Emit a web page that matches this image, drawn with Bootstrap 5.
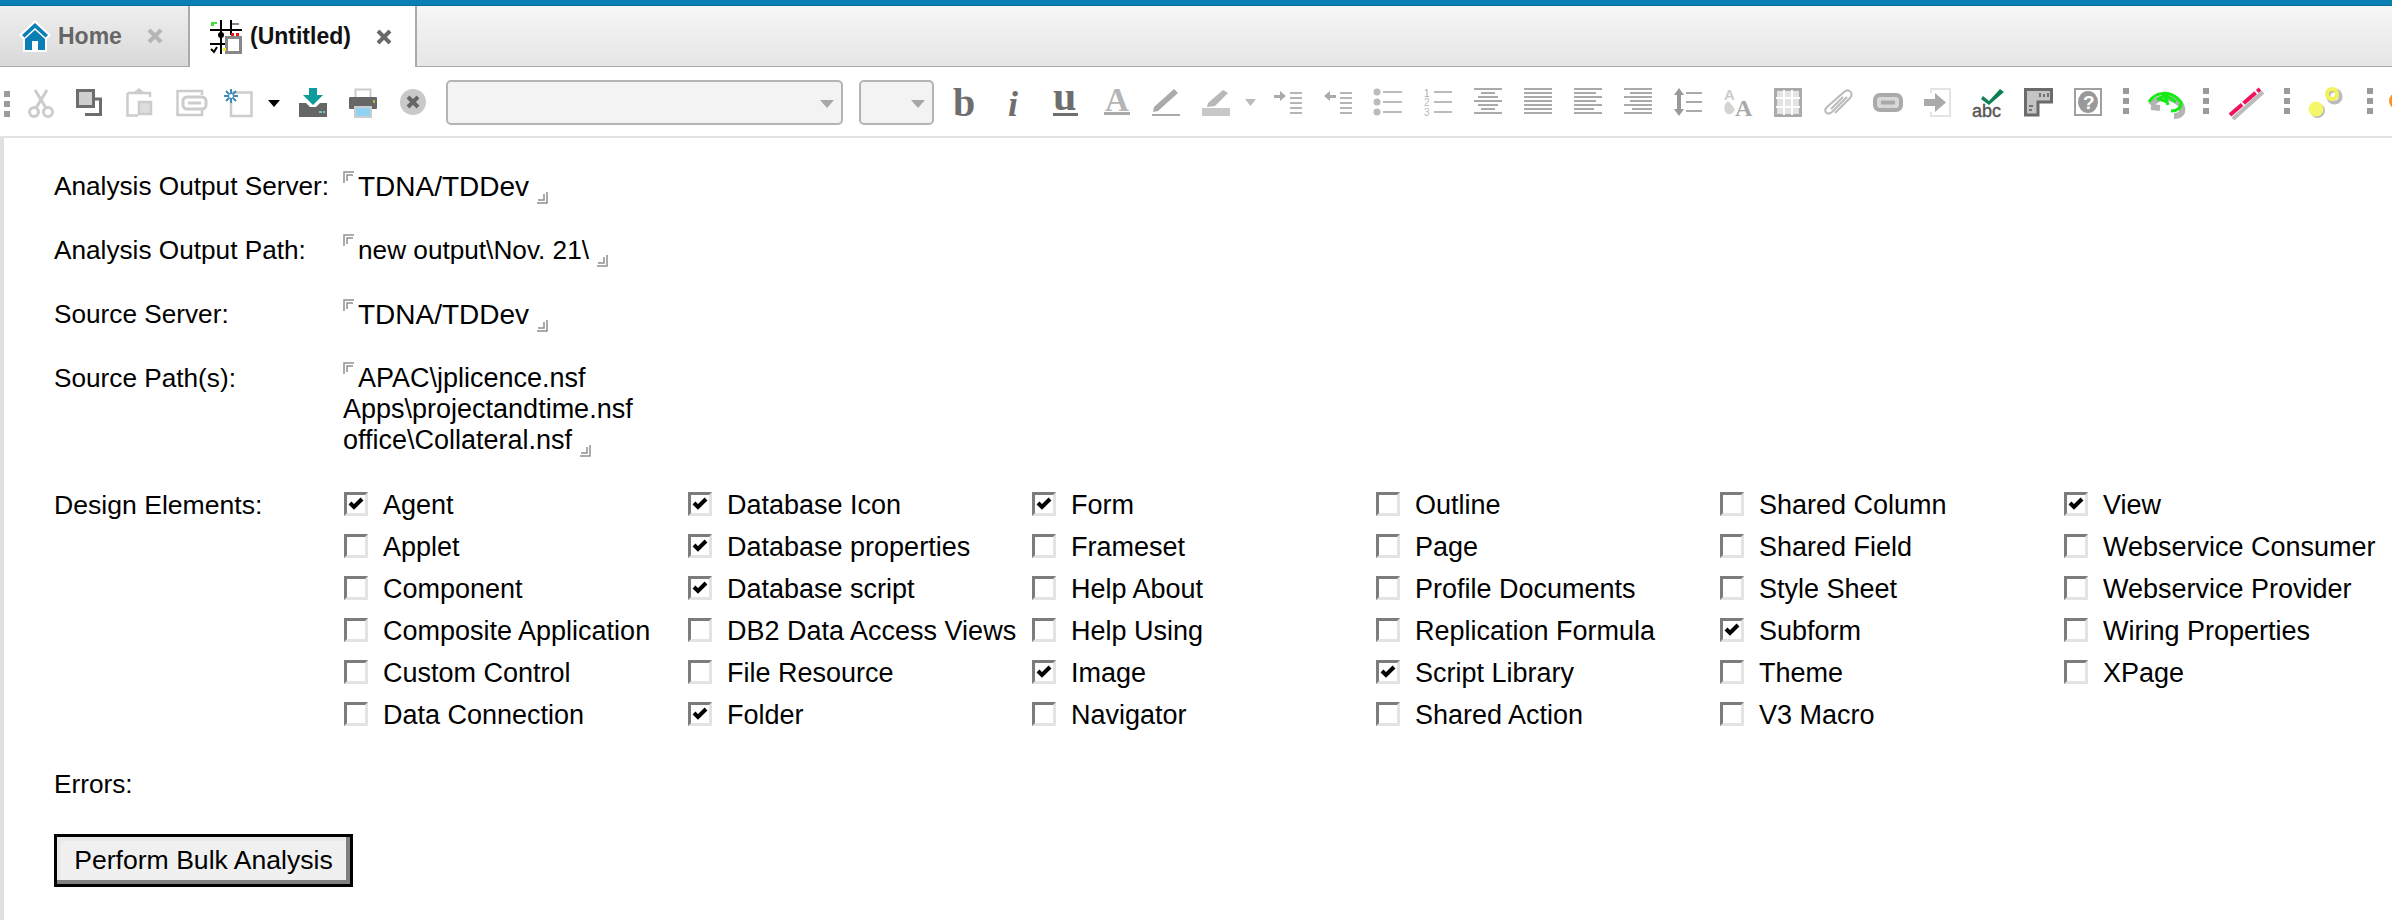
<!DOCTYPE html>
<html lang="en">
<head>
<meta charset="utf-8">
<title>(Untitled)</title>
<link href="https://cdn.jsdelivr.net/npm/bootstrap@5.3.0/dist/css/bootstrap.min.css" rel="stylesheet">
<style>
html,body{height:920px;overflow:hidden;background:#fff}
body{font-family:"Liberation Sans",Arial,sans-serif;color:#000}
.topline{height:6px;background:#0a7fb5;border-bottom:1px solid #0b6f9e}
.tabstrip{height:61px;background:linear-gradient(#f6f6f6,#e6e6e6);border-bottom:1px solid #aaa}
.doctab{height:60px;font-size:23px;font-weight:700;line-height:1}
.tab-home{width:190px;padding-left:19px;background:linear-gradient(#efefef,#d9d9d9);color:#666;border-right:2px solid #aaa}
.tab-home .tabname{margin-left:7px;margin-right:25px}
.tab-doc{width:227px;height:61px;padding-left:20px;background:#fff;border-right:2px solid #aaa;color:#111}
.tab-doc .tabname{margin-left:8px;margin-right:25px}
.tabx{width:16px;height:16px}
.toolstrip{height:71px;padding-top:2px;border-bottom:2px solid #e2e2e2;overflow:hidden}
.ic{display:block;flex:none;width:50px;height:30px;overflow:visible}
.ic-narrow{width:20px}
.ic-mini{width:13px;margin-left:3px;margin-right:6px}
.ic-w36{width:36px}
.ic-w34{width:34px}
.ic-w20{width:20px}
.gripbar{display:flex;flex-direction:column;gap:4px;flex:none;width:6px;margin-top:-3px}
.gripbar i{display:block;width:6px;height:6px;background:#9b9b9b}
.grip-first{margin-top:2px}
.s10{margin-left:10px}.s11{margin-left:11px}.s18{margin-left:18px}.s20{margin-left:20px}.s21{margin-left:21px}.s25{margin-left:25px}
.fakeselect{flex:none;height:45px;border:2px solid #b2b5b8;border-radius:5px;background:#f3f3f3;position:relative;padding:0}
.fakeselect::after{content:"";position:absolute;right:7px;top:18px;border:7px solid transparent;border-top:8px solid #a8a8a8;border-bottom:0}
.sel-font{width:397px;margin-left:8px}
.sel-size{width:75px;margin-left:16px;margin-right:7px}
.docbody{height:782px;border-left:4px solid #e0e0e0;padding:33px 0 0 50px;font-size:26.2px;line-height:31px}
.fieldrow{margin-bottom:33px}
.fieldlabel{flex:none;width:289px}
.label-wide{font-size:26.6px;padding-top:1px}
.val-server{font-size:28px}
.val-path{font-size:27px}
.delim{display:inline-block;width:12px;height:12px}
.delim-open{vertical-align:13px;margin-right:3px;margin-top:-4px}
.delim-close{vertical-align:-4px;margin-left:7px;margin-bottom:-4px}
.elements{width:2040px;margin:0 0 28px 1px;font-size:27px;line-height:33px}
.elcol{flex:none;width:344px}
.elitem{height:42px;margin:0;padding:0;white-space:nowrap}
.elitem .form-check-input{width:24px;height:24px;margin:3px 15px 0 0;flex:none;border-radius:0;border-style:solid;border-width:3px;border-color:#7c7c7c #e3e3e3 #e3e3e3 #7c7c7c;background-color:#fff;background-size:18px 18px;box-shadow:none;opacity:1}
.elitem .form-check-input:checked{background-color:#fff;border-color:#7c7c7c #e3e3e3 #e3e3e3 #7c7c7c;--bs-form-check-bg-image:url("data:image/svg+xml,%3csvg xmlns='http://www.w3.org/2000/svg' viewBox='0 0 18 18'%3e%3cpath d='M3 8l4 4 8-8' fill='none' stroke='%23000' stroke-width='4'/%3e%3c/svg%3e")}
.perform{display:block;width:299px;height:53px;margin-top:34px;padding:0;border:3px solid #000;border-radius:0;background:#f0f0f0;color:#000;font-size:26.6px;line-height:1;box-shadow:inset -4px -4px 0 #808080,inset 4px 4px 0 #e8e8e8}
.perform:hover{background:#f0f0f0;color:#000;border-color:#000}
.glyph{font-family:"Liberation Serif",serif}
</style>
</head>
<body>
<div class="topline"></div>
<div class="tabstrip d-flex align-items-start">
  <div class="doctab tab-home d-flex align-items-center">
    <svg width="32" height="34" viewBox="0 0 32 34"><path d="M16 1 32 16 28 20V33H4V20L0 16Z" fill="#fff"/><path d="M16 4 29 16 26.500 18.500 16 9 5.500 18.500 3 16ZM6 20 16 11 26 20V31H19V22H13V31H6Z" fill="#0a7fb5"/></svg>
    <span class="tabname">Home</span>
    <svg class="tabx" viewBox="0 0 16 16"><path d="M2 2 14 14M14 2 2 14" stroke="#b5b5b5" stroke-width="4"/></svg>
  </div>
  <div class="doctab tab-doc d-flex align-items-center">
    <svg width="32" height="34" viewBox="0 0 32 34"><path d="M0 10H32M0 24H15M11 0V34M21 0V15" stroke="#000" stroke-width="2" fill="none"/><path d="M1 2h6v2H1zM1 4h3v2H1z" fill="#3fe03f"/><path d="M22 3h7v2h-7z" fill="#888"/><path d="M21 13h3v3h-3zM26 13h3v3h-3z" fill="#e11"/><rect x="16.500" y="17.500" width="14" height="15" fill="#fff" stroke="#888" stroke-width="3"/><circle cx="11" cy="15" r="3" fill="#000"/><path d="M1 29l3 3 3-5" stroke="#000" stroke-width="2" fill="none"/><path d="M13 28h3v3h-3z" fill="#ee2"/></svg>
    <span class="tabname">(Untitled)</span>
    <svg class="tabx" viewBox="0 0 16 16"><path d="M2 2 14 14M14 2 2 14" stroke="#6a6a6a" stroke-width="4"/></svg>
  </div>
</div>

<div class="toolstrip d-flex align-items-center ps-1">
  <div class="gripbar grip-first"><i></i><i></i><i></i></div>
  <svg class="ic ms-1" viewBox="0 0 50 30" fill="none" stroke="#ccc" stroke-width="3"><circle cx="20" cy="24" r="4.500"/><circle cx="34" cy="24" r="4.500"/><path d="M22 20 33 2M32 20 21 2"/></svg>
  <svg class="ic" viewBox="0 0 50 30"><rect x="13.500" y="2.500" width="16" height="16" fill="#cfcfcf" stroke="#6d6d6d" stroke-width="3"/><path d="M21 26.500H36.500V11H30" fill="none" stroke="#6d6d6d" stroke-width="3"/></svg>
  <svg class="ic" viewBox="0 0 50 30"><path d="M13.500 5H36V9M24 27.500H13.500V5" fill="none" stroke="#ccc" stroke-width="2.500"/><path d="M19 5 25 0 31 5Z" fill="#ccc"/><rect x="25" y="14" width="12" height="12" fill="#ddd" stroke="#ccc" stroke-width="2.500"/></svg>
  <svg class="ic" viewBox="0 0 50 30"><path d="M38 7V3H13.500V27H38V22" fill="none" stroke="#ccc" stroke-width="2.500"/><rect x="19" y="9" width="23" height="12" rx="4" fill="#fff" stroke="#ccc" stroke-width="3"/><path d="M24 15H37" stroke="#ccc" stroke-width="3"/></svg>
  <svg class="ic" viewBox="0 0 50 30"><path d="M17 4.500H37.500V28H17V12" fill="#fff" stroke="#ccc" stroke-width="2.500"/><path d="M10 8H24M17 1V15M12 3 22 13M22 3 12 13" stroke="#3d8ab9" stroke-width="2"/><circle cx="17" cy="8" r="2" fill="#fff"/></svg>
  <svg class="ic ic-narrow me-1" viewBox="0 0 20 30"><path d="M4 12H16L10 19Z" fill="#000"/></svg>
  <svg class="ic" viewBox="0 0 50 30"><path d="M11 15h7l4 4h6l4-4h7v14H11Z" fill="#666"/><path d="M21 0h8v7h6L25 17 15 7h6Z" fill="#0d9c9c"/><path d="M31 23h3v2h-3zM35 23h2v2h-2z" fill="#6cc"/></svg>
  <svg class="ic" viewBox="0 0 50 30"><rect x="17.500" y="1.500" width="15" height="10" fill="#fff" stroke="#ccc" stroke-width="2"/><rect x="11" y="9" width="28" height="12" rx="1" fill="#666"/><path d="M35 12h2v3h-2z" fill="#9c3"/><rect x="17" y="19" width="16" height="10" fill="#8fd3f4" stroke="#ccc" stroke-width="2"/></svg>
  <svg class="ic" viewBox="0 0 50 30"><circle cx="25" cy="14" r="13" fill="#c9c9c9"/><path d="M20 9 30 19M30 9 20 19" stroke="#666" stroke-width="4"/></svg>
  <div class="fakeselect sel-font"></div>
  <div class="fakeselect sel-size"></div>
  <svg class="ic" viewBox="0 0 50 30"><text x="12" y="28" class="glyph" font-size="40" font-weight="700" fill="#6e6e6e">b</text></svg>
  <svg class="ic" viewBox="0 0 50 30"><text x="17" y="28" class="glyph" font-size="36" font-weight="700" font-style="italic" fill="#6e6e6e">i</text></svg>
  <svg class="ic" viewBox="0 0 50 30"><text x="12" y="22" class="glyph" font-size="42" font-weight="700" fill="#6e6e6e">u</text><path d="M12 26.500H37" stroke="#6e6e6e" stroke-width="3"/></svg>
  <svg class="ic" viewBox="0 0 50 30"><text x="14" y="23" class="glyph" font-size="33" font-weight="700" fill="#b5b5b5">A</text><path d="M13 25.500H39" stroke="#aaa" stroke-width="3"/></svg>
  <svg class="ic" viewBox="0 0 50 30"><path d="M13 19 33 1 37 5 17 23 12 24Z" fill="#aaa"/><path d="M11 27H39" stroke="#aaa" stroke-width="2"/></svg>
  <svg class="ic" viewBox="0 0 50 30"><path d="M17 15 32 2 37 5 24 18 16 19Z" fill="#b8b8b8"/><rect x="11" y="20" width="28" height="8" fill="#c8c8c8"/></svg>
  <svg class="ic ic-mini" viewBox="0 0 13 30"><path d="M1 11H12L6.500 18Z" fill="#bbb"/></svg>
  <svg class="ic" viewBox="0 0 50 30"><path d="M11 7h6V3l6 5-6 5V10h-6Z" fill="#aaa"/><path d="M27 5H39M27 10H39M27 15H39M27 20H39M27 25H39" stroke="#b5b5b5" stroke-width="2"/></svg>
  <svg class="ic" viewBox="0 0 50 30"><path d="M23 7h-6V3l-6 5 6 5V10h6Z" fill="#aaa"/><path d="M27 5H39M27 10H39M27 15H39M27 20H39M27 25H39" stroke="#b5b5b5" stroke-width="2"/></svg>
  <svg class="ic" viewBox="0 0 50 30" fill="#bbb"><circle cx="14" cy="4" r="3.500"/><circle cx="14" cy="14" r="3.500"/><circle cx="14" cy="24" r="3.500"/><path d="M20 4H39M20 14H39M20 24H39" stroke="#bbb" stroke-width="2"/></svg>
  <svg class="ic" viewBox="0 0 50 30"><text x="11" y="9" font-size="10" fill="#aaa">1</text><text x="11" y="18" font-size="10" fill="#bbb">2</text><text x="11" y="28" font-size="10" fill="#bbb">3</text><path d="M21 4H39M21 14H39M21 24H39" stroke="#bbb" stroke-width="2"/></svg>
  <svg class="ic" viewBox="0 0 50 30"><path d="M11 1H39M18 5H32M15 9H35M11 13H39M15 17H35M18 21H32M11 25H39" stroke="#aaa" stroke-width="2"/></svg>
  <svg class="ic" viewBox="0 0 50 30"><path d="M11 1H39M11 5H39M11 9H39M11 13H39M11 17H39M11 21H39M11 25H39" stroke="#aaa" stroke-width="2"/></svg>
  <svg class="ic" viewBox="0 0 50 30"><path d="M11 1H39M11 5H33M11 9H39M11 13H33M11 17H39M11 21H31M11 25H39" stroke="#aaa" stroke-width="2"/></svg>
  <svg class="ic" viewBox="0 0 50 30"><path d="M11 1H39M17 5H39M11 9H39M17 13H39M11 17H39M19 21H39M11 25H39" stroke="#aaa" stroke-width="2"/></svg>
  <svg class="ic" viewBox="0 0 50 30"><path d="M16 3V25" stroke="#999" stroke-width="4"/><path d="M16 0 11 7H21ZM16 28 11 21H21Z" fill="#999"/><path d="M23 5H39M23 14H39M23 23H39" stroke="#aaa" stroke-width="2"/></svg>
  <svg class="ic" viewBox="0 0 50 30"><path d="M15 13C11 16 10 21 13 25 16 28 20 25 22 22 20 18 18 16 15 13Z" fill="#d4d4d4"/><text x="11" y="12" font-size="15" font-weight="700" fill="#ccc">A</text><text x="22" y="28" class="glyph" font-size="24" font-weight="700" fill="#a8a8a8">A</text></svg>
  <svg class="ic" viewBox="0 0 50 30"><rect x="12.500" y="1.500" width="25" height="26" fill="#e4e4e4" stroke="#aaa" stroke-width="3"/><path d="M21 2V27M29 2V27M13 10H37M13 19H37" stroke="#fff" stroke-width="2"/></svg>
  <svg class="ic" viewBox="0 0 50 30" fill="none" stroke="#bbb" stroke-width="2"><path d="M34 9 19 24C14 28 10 23 14 19L31 4C36 0 41 5 37 10L22 25"/><path d="M30 9 18 21"/></svg>
  <svg class="ic" viewBox="0 0 50 30"><rect x="12" y="7" width="26" height="15" rx="5" fill="#d8d8d8" stroke="#aaa" stroke-width="4"/><path d="M18 14.500H32" stroke="#aaa" stroke-width="4"/></svg>
  <svg class="ic" viewBox="0 0 50 30"><path d="M18 5V1H37V28H18V24" fill="none" stroke="#e4e4e4" stroke-width="2"/><path d="M11 11H22V5L33 14.500 22 24V18H11Z" fill="#aaa"/></svg>
  <svg class="ic" viewBox="0 0 50 30"><path d="M20 8 26 13 37 1 41 4 26 17 18 11Z" fill="#0d8050"/><text x="9" y="29" font-size="18" fill="#555" stroke="#555" stroke-width=".4">abc</text></svg>
  <svg class="ic" viewBox="0 0 50 30"><path d="M12.500 1.500H38.500V14H25V27H12.500Z" fill="#c4c4c4" stroke="#6b6b6b" stroke-width="3"/><path d="M27 9V5M31 9V6M35 9V5M16 18H20M16 22H19" stroke="#555" stroke-width="1.500"/></svg>
  <svg class="ic" viewBox="0 0 50 30"><rect x="12" y="1" width="26" height="26" fill="#fff" stroke="#a0a0a0" stroke-width="2"/><ellipse cx="25" cy="14" rx="10" ry="11" fill="#999"/><text x="20" y="21" font-size="19" font-weight="700" fill="#fff">?</text></svg>
  <div class="gripbar s10"><i></i><i></i><i></i></div>
  <svg class="ic ic-w36 s18" viewBox="0 0 36 30"><path d="M3 16C9 8 22 5 33 16 36 22 34 27 26 27M3 18 12 19" fill="none" stroke="#b4b4b4" stroke-width="6" transform="translate(1 1)"/><path d="M2 14C8 4 23 1 34 14 35 20 30 23 24 23M10 12 18 7 21 17M18 7 29 14M13 11 20 14" fill="none" stroke="#12ee12" stroke-width="3"/></svg>
  <div class="gripbar s20"><i></i><i></i><i></i></div>
  <svg class="ic ic-w34 s20" viewBox="0 0 34 30"><path d="M3 29 33 2" stroke="#bbb" stroke-width="4" transform="translate(1 2)"/><path d="M1 27 31 1" stroke="#f0125a" stroke-width="4" stroke-dasharray="16 2"/></svg>
  <div class="gripbar s21"><i></i><i></i><i></i></div>
  <svg class="ic ic-w34 s18" viewBox="0 0 34 30"><circle cx="25" cy="7" r="6" fill="none" stroke="#bbb" stroke-width="4" transform="translate(1.500 1.500)"/><circle cx="8" cy="21" r="7.500" fill="#bbb" transform="translate(1.500 1.500)"/><circle cx="24" cy="6" r="5" fill="none" stroke="#f2f25a" stroke-width="4"/><circle cx="8" cy="21" r="7.500" fill="#f6f66a"/></svg>
  <div class="gripbar s25"><i></i><i></i><i></i></div>
  <svg class="ic ic-w20 s11" viewBox="0 0 20 30"><circle cx="13" cy="13" r="8" fill="#ff9024"/></svg>
</div>

<div class="docbody">
  <div class="fieldrow d-flex">
    <div class="fieldlabel">Analysis Output Server:</div>
    <div class="val-server"><svg class="delim delim-open" viewBox="0 0 12 12"><path d="M1 12V1H11M4 10V4H10" fill="none" stroke="#909090" stroke-width="1.500"/></svg>TDNA/TDDev<svg class="delim delim-close" viewBox="0 0 12 12"><path d="M11 0V11H1M8 2V8H2" fill="none" stroke="#909090" stroke-width="1.500"/></svg></div>
  </div>
  <div class="fieldrow d-flex">
    <div class="fieldlabel">Analysis Output Path:</div>
    <div><svg class="delim delim-open" viewBox="0 0 12 12"><path d="M1 12V1H11M4 10V4H10" fill="none" stroke="#909090" stroke-width="1.500"/></svg>new output\Nov. 21\<svg class="delim delim-close" viewBox="0 0 12 12"><path d="M11 0V11H1M8 2V8H2" fill="none" stroke="#909090" stroke-width="1.500"/></svg></div>
  </div>
  <div class="fieldrow d-flex">
    <div class="fieldlabel">Source Server:</div>
    <div class="val-server"><svg class="delim delim-open" viewBox="0 0 12 12"><path d="M1 12V1H11M4 10V4H10" fill="none" stroke="#909090" stroke-width="1.500"/></svg>TDNA/TDDev<svg class="delim delim-close" viewBox="0 0 12 12"><path d="M11 0V11H1M8 2V8H2" fill="none" stroke="#909090" stroke-width="1.500"/></svg></div>
  </div>
  <div class="fieldrow d-flex">
    <div class="fieldlabel">Source Path(s):</div>
    <div class="val-path"><svg class="delim delim-open" viewBox="0 0 12 12"><path d="M1 12V1H11M4 10V4H10" fill="none" stroke="#909090" stroke-width="1.500"/></svg>APAC\jplicence.nsf<br>Apps\projectandtime.nsf<br>office\Collateral.nsf<svg class="delim delim-close" viewBox="0 0 12 12"><path d="M11 0V11H1M8 2V8H2" fill="none" stroke="#909090" stroke-width="1.500"/></svg></div>
  </div>
  <div class="d-flex">
    <div class="fieldlabel label-wide">Design Elements:</div>
    <div class="elements d-flex">
      <div class="elcol">
        <label class="elitem d-flex align-items-start"><input class="form-check-input" type="checkbox" checked>Agent</label>
        <label class="elitem d-flex align-items-start"><input class="form-check-input" type="checkbox">Applet</label>
        <label class="elitem d-flex align-items-start"><input class="form-check-input" type="checkbox">Component</label>
        <label class="elitem d-flex align-items-start"><input class="form-check-input" type="checkbox">Composite Application</label>
        <label class="elitem d-flex align-items-start"><input class="form-check-input" type="checkbox">Custom Control</label>
        <label class="elitem d-flex align-items-start"><input class="form-check-input" type="checkbox">Data Connection</label>
      </div>
      <div class="elcol">
        <label class="elitem d-flex align-items-start"><input class="form-check-input" type="checkbox" checked>Database Icon</label>
        <label class="elitem d-flex align-items-start"><input class="form-check-input" type="checkbox" checked>Database properties</label>
        <label class="elitem d-flex align-items-start"><input class="form-check-input" type="checkbox" checked>Database script</label>
        <label class="elitem d-flex align-items-start"><input class="form-check-input" type="checkbox">DB2 Data Access Views</label>
        <label class="elitem d-flex align-items-start"><input class="form-check-input" type="checkbox">File Resource</label>
        <label class="elitem d-flex align-items-start"><input class="form-check-input" type="checkbox" checked>Folder</label>
      </div>
      <div class="elcol">
        <label class="elitem d-flex align-items-start"><input class="form-check-input" type="checkbox" checked>Form</label>
        <label class="elitem d-flex align-items-start"><input class="form-check-input" type="checkbox">Frameset</label>
        <label class="elitem d-flex align-items-start"><input class="form-check-input" type="checkbox">Help About</label>
        <label class="elitem d-flex align-items-start"><input class="form-check-input" type="checkbox">Help Using</label>
        <label class="elitem d-flex align-items-start"><input class="form-check-input" type="checkbox" checked>Image</label>
        <label class="elitem d-flex align-items-start"><input class="form-check-input" type="checkbox">Navigator</label>
      </div>
      <div class="elcol">
        <label class="elitem d-flex align-items-start"><input class="form-check-input" type="checkbox">Outline</label>
        <label class="elitem d-flex align-items-start"><input class="form-check-input" type="checkbox">Page</label>
        <label class="elitem d-flex align-items-start"><input class="form-check-input" type="checkbox">Profile Documents</label>
        <label class="elitem d-flex align-items-start"><input class="form-check-input" type="checkbox">Replication Formula</label>
        <label class="elitem d-flex align-items-start"><input class="form-check-input" type="checkbox" checked>Script Library</label>
        <label class="elitem d-flex align-items-start"><input class="form-check-input" type="checkbox">Shared Action</label>
      </div>
      <div class="elcol">
        <label class="elitem d-flex align-items-start"><input class="form-check-input" type="checkbox">Shared Column</label>
        <label class="elitem d-flex align-items-start"><input class="form-check-input" type="checkbox">Shared Field</label>
        <label class="elitem d-flex align-items-start"><input class="form-check-input" type="checkbox">Style Sheet</label>
        <label class="elitem d-flex align-items-start"><input class="form-check-input" type="checkbox" checked>Subform</label>
        <label class="elitem d-flex align-items-start"><input class="form-check-input" type="checkbox">Theme</label>
        <label class="elitem d-flex align-items-start"><input class="form-check-input" type="checkbox">V3 Macro</label>
      </div>
      <div class="elcol">
        <label class="elitem d-flex align-items-start"><input class="form-check-input" type="checkbox" checked>View</label>
        <label class="elitem d-flex align-items-start"><input class="form-check-input" type="checkbox">Webservice Consumer</label>
        <label class="elitem d-flex align-items-start"><input class="form-check-input" type="checkbox">Webservice Provider</label>
        <label class="elitem d-flex align-items-start"><input class="form-check-input" type="checkbox">Wiring Properties</label>
        <label class="elitem d-flex align-items-start"><input class="form-check-input" type="checkbox">XPage</label>
      </div>
    </div>
  </div>
  <div>Errors:</div>
  <button type="button" class="btn perform">Perform Bulk Analysis</button>
</div>
<script src="https://cdn.jsdelivr.net/npm/bootstrap@5.3.0/dist/js/bootstrap.bundle.min.js"></script>
</body>
</html>
